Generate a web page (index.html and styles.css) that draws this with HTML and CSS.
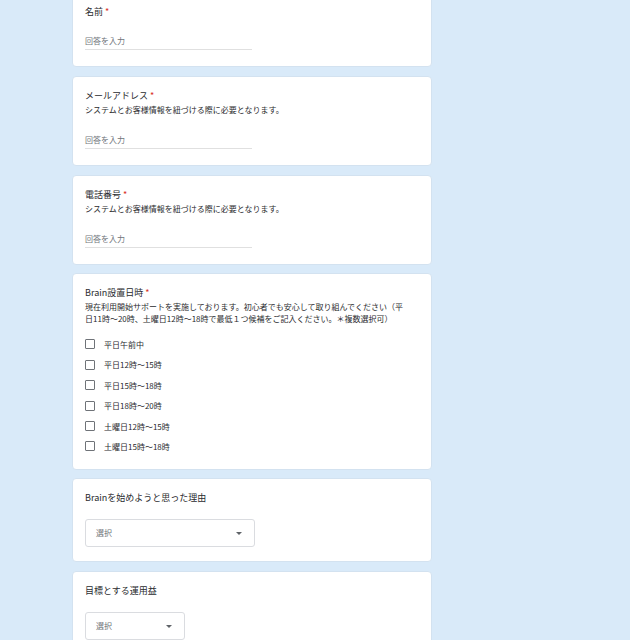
FILE: index.html
```html
<!DOCTYPE html>
<html lang="ja">
<head>
    <meta charset="UTF-8">
    <meta name="viewport" content="width=device-width, initial-scale=1.0">
    <title>Brain 設置申し込み</title>
    <link rel="stylesheet" href="styles.css">
</head>
<body>
    <main class="form-list">
        <!-- 名前 -->
        <section class="card">
            <div class="q-title">名前 <span class="req">*</span></div>
            <div class="answer answer-tight">回答を入力</div>
        </section>

        <section class="card">
            <div class="q-title">メールアドレス <span class="req">*</span></div>
            <div class="q-desc">システムとお客様情報を紐づける際に必要となります。</div>
            <div class="answer">回答を入力</div>
        </section>

        <section class="card">
            <div class="q-title">電話番号 <span class="req">*</span></div>
            <div class="q-desc">システムとお客様情報を紐づける際に必要となります。</div>
            <div class="answer">回答を入力</div>
        </section>

        <!-- 設置日時: 複数選択 -->
        <section class="card">
            <div class="q-title">Brain設置日時 <span class="req">*</span></div>
            <div class="q-desc">現在利用開始サポートを実施しております。初心者でも安心して取り組んでください（平<br>日11時～20時、土曜日12時～18時で最低１つ候補をご記入ください。＊複数選択可）</div>
            <div class="choices">
                <label class="choice"><span class="box"></span>平日午前中</label>
                <label class="choice"><span class="box"></span>平日12時～15時</label>
                <label class="choice"><span class="box"></span>平日15時～18時</label>
                <label class="choice"><span class="box"></span>平日18時～20時</label>
                <label class="choice"><span class="box"></span>土曜日12時～15時</label>
                <label class="choice"><span class="box"></span>土曜日15時～18時</label>
            </div>
        </section>

        <section class="card">
            <div class="q-title">Brainを始めようと思った理由</div>
            <div class="select">選択<span class="arrow"></span></div>
        </section>

        <section class="card">
            <div class="q-title">目標とする運用益</div>
            <div class="select select-small">選択<span class="arrow"></span></div>
        </section>
    </main>
</body>
</html>
```

FILE: styles.css
```css
body {
    margin: 0;
    background: #d9eaf9;
    color: #202124;
    font-family: "Noto Sans CJK JP", "Noto Sans", sans-serif;
}

.form-list {
    width: 360px;
    margin: -8px 0 0 72px;
    display: flex;
    flex-direction: column;
    gap: 8.75px;
}

.card {
    background: #ffffff;
    border: 1px solid #d3e2f0;
    border-radius: 4px;
    padding: 12px 12px 12px;
}

.q-title {
    font-size: 9px;
    line-height: 14px;
    color: #2a2b2e;
}

.req {
    color: #d93025;
}

.q-desc {
    margin-top: 1px;
    font-size: 8px;
    line-height: 12px;
    color: #2a2b2e;
}

/* short text answer */
.answer {
    width: 167px;
    margin-top: 18px;
    margin-bottom: 4px;
    padding-bottom: 2px;
    border-bottom: 1px solid #e0e0e0;
    font-size: 8px;
    line-height: 12px;
    color: #70757a;
}

.answer-tight {
    margin-top: 16px;
}

/* checkboxes */
.choices {
    margin-top: 9px;
}

.choice {
    display: flex;
    align-items: center;
    height: 20.4px;
    font-size: 8px;
    color: #2a2b2e;
}

.box {
    width: 8px;
    height: 8px;
    border: 1.2px solid #6f7378;
    border-radius: 1px;
    margin-right: 9px;
}

/* dropdown */
.select {
    position: relative;
    box-sizing: border-box;
    width: 170px;
    height: 28px;
    margin-top: 14px;
    margin-bottom: 2px;
    padding-left: 10px;
    border: 1px solid #dadce0;
    border-radius: 3px;
    font-size: 8px;
    line-height: 26px;
    color: #70757a;
}

.select-small {
    width: 100px;
}

.arrow {
    position: absolute;
    right: 12px;
    top: 12px;
    border-left: 3px solid transparent;
    border-right: 3px solid transparent;
    border-top: 3px solid #5f6368;
}
```
